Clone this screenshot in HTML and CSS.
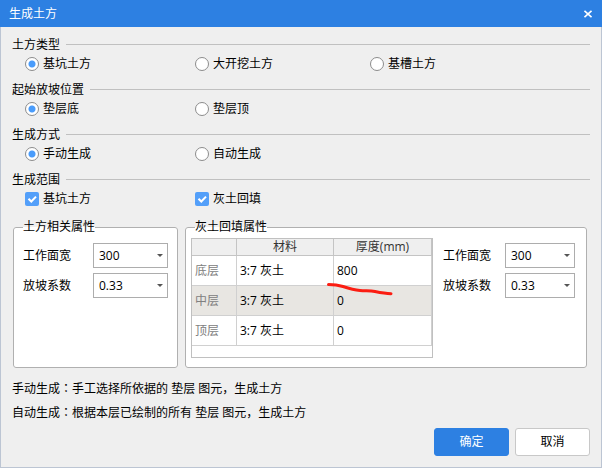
FILE: index.html
```html
<!DOCTYPE html>
<html lang="zh-CN">
<head>
<meta charset="utf-8">
<title>生成土方</title>
<link rel="stylesheet" href="styles.css">
</head>
<body>
<main class="dialog">
  <header class="titlebar">
    <h1 class="title">生成土方</h1>
    <button class="close" type="button" aria-label="关闭">
      <svg width="8" height="8" viewBox="0 0 8 8"><path d="M0.5 0.8L7.5 7.2M7.5 0.8L0.5 7.2"/></svg>
    </button>
  </header>
  <form class="content">
    <section class="section">
      <h2 class="heading">土方类型</h2>
      <div class="choices">
        <label class="choice"><input class="radio" type="radio" name="kind" checked>基坑土方</label>
        <label class="choice"><input class="radio" type="radio" name="kind">大开挖土方</label>
        <label class="choice"><input class="radio" type="radio" name="kind">基槽土方</label>
      </div>
    </section>
    <section class="section">
      <h2 class="heading">起始放坡位置</h2>
      <div class="choices">
        <label class="choice"><input class="radio" type="radio" name="start" checked>垫层底</label>
        <label class="choice"><input class="radio" type="radio" name="start">垫层顶</label>
      </div>
    </section>
    <section class="section">
      <h2 class="heading">生成方式</h2>
      <div class="choices">
        <label class="choice"><input class="radio" type="radio" name="mode" checked>手动生成</label>
        <label class="choice"><input class="radio" type="radio" name="mode">自动生成</label>
      </div>
    </section>
    <section class="section">
      <h2 class="heading">生成范围</h2>
      <div class="choices">
        <label class="choice"><span class="tick"><input class="checkbox" type="checkbox" checked><svg class="mark" width="14" height="14" viewBox="0 0 14 14"><path d="M3.5 6.7L6.3 9.5L11 4.6"/></svg></span>基坑土方</label>
        <label class="choice"><span class="tick"><input class="checkbox" type="checkbox" checked><svg class="mark" width="14" height="14" viewBox="0 0 14 14"><path d="M3.5 6.7L6.3 9.5L11 4.6"/></svg></span>灰土回填</label>
      </div>
    </section>

    <div class="panels">
      <fieldset class="panel panel-earth">
        <legend class="legend">土方相关属性</legend>
        <div class="fields">
          <label for="earth-width">工作面宽</label>
          <span class="combo"><select id="earth-width"><option>300</option></select></span>
          <label for="earth-slope">放坡系数</label>
          <span class="combo"><select id="earth-slope"><option>0.33</option></select></span>
        </div>
      </fieldset>
      <fieldset class="panel panel-fill">
        <legend class="legend">灰土回填属性</legend>
        <div class="fill-body">
          <div class="table-box">
            <table class="layers">
              <colgroup><col class="col-layer"><col class="col-material"><col></colgroup>
              <thead>
                <tr><th></th><th scope="col">材料</th><th scope="col">厚度(mm)</th></tr>
              </thead>
              <tbody>
                <tr><th scope="row">底层</th><td>3:7 灰土</td><td class="marked">800<svg class="stroke" width="70" height="16" viewBox="0 0 70 16"><path d="M4.500 3.500C9 3.500 14 4 19 5.500C25 7.500 30 9 36 9.500C42 10 46 9.500 51 10.500C56 11.500 61 12.500 67 12.800"/></svg></td></tr>
                <tr class="alt"><th scope="row">中层</th><td>3:7 灰土</td><td>0</td></tr>
                <tr><th scope="row">顶层</th><td>3:7 灰土</td><td>0</td></tr>
              </tbody>
            </table>
          </div>
          <div class="fields">
            <label for="fill-width">工作面宽</label>
            <span class="combo"><select id="fill-width"><option>300</option></select></span>
            <label for="fill-slope">放坡系数</label>
            <span class="combo"><select id="fill-slope"><option>0.33</option></select></span>
          </div>
        </div>
      </fieldset>
    </div>

    <div class="notes">
      <p>手动生成<span class="colon" lang="ja">：</span>手工选择所依据的 垫层 图元，生成土方</p>
      <p>自动生成<span class="colon" lang="ja">：</span>根据本层已绘制的所有 垫层 图元，生成土方</p>
    </div>
    <div class="actions">
      <button class="button primary" type="button">确定</button>
      <button class="button" type="button">取消</button>
    </div>
  </form>
</main>
</body>
</html>
```
FILE: styles.css
```css
* {
  box-sizing: border-box;
}

body {
  margin: 0;
  background: #efefef;
  color: #000;
  font: 12px/18px "Open Sans", "Noto Sans CJK SC", sans-serif;
}

h1, h2, p {
  margin: 0;
  font-size: 12px;
  font-weight: 400;
}

button, select, input {
  margin: 0;
  font: inherit;
}

.dialog {
  border: 1px solid #bcc5d3;
  border-top: 0;
}

.titlebar {
  display: flex;
  align-items: center;
  justify-content: space-between;
  height: 27px;
  margin: 0 -1px;
  padding: 0 10px 0 9px;
  background: #2d80e2;
  color: #fff;
}

.close {
  display: flex;
  padding: 0;
  border: 0;
  background: none;
}

.close path {
  fill: none;
  stroke: #fff;
  stroke-width: 1.6;
}

.content {
  padding: 8px 11px 11px;
}

.section {
  margin-bottom: 6px;
}

.heading {
  display: flex;
  align-items: center;
  gap: 6px;
  height: 19px;
}

.heading::after {
  content: "";
  flex: 1;
  height: 1px;
  background: #c0c0c0;
}

.choices {
  display: grid;
  grid-template-columns: 170fr 175fr 220fr;
  height: 20px;
  padding-left: 13px;
}

.choice {
  display: flex;
  align-items: center;
  gap: 4px;
  line-height: 20px;
}

.radio {
  appearance: none;
  width: 14px;
  height: 14px;
  border: 1px solid #8c8c8c;
  border-radius: 50%;
  background: #fff;
}

.radio:checked {
  background: radial-gradient(circle, #4a9cfb 3px, #fff 4px);
}

.tick {
  position: relative;
  display: flex;
}

.checkbox {
  appearance: none;
  width: 14px;
  height: 14px;
  border-radius: 2px;
  background: #539ff9;
}

.mark {
  position: absolute;
  inset: 0;
  fill: none;
  stroke: #fff;
  stroke-width: 2;
  pointer-events: none;
}

.panels {
  display: grid;
  grid-template-columns: 165fr 402fr;
  gap: 7px;
  margin: 9px 3px 0 1px;
}

.panel {
  min-width: 0;
  margin: 0;
  border: 1px solid #b0b0b0;
  border-radius: 3px;
  background: #fff;
}

.panel-earth {
  padding: 2px 9px 9px;
}

.panel-fill {
  padding: 2px 11px 9px 5px;
}

.legend {
  padding: 0;
}

.panel-fill .legend {
  margin-left: 4px;
}

.fields {
  display: grid;
  grid-template-columns: 70px 1fr;
  grid-auto-rows: 25px;
  row-gap: 5px;
  align-items: center;
  padding-top: 5px;
}

.fill-body {
  display: grid;
  grid-template-columns: 242fr 132fr;
  gap: 10px;
}

.fill-body .fields {
  grid-template-columns: 62px 1fr;
  align-content: start;
}

.combo {
  position: relative;
}

.combo select {
  appearance: none;
  display: block;
  width: 100%;
  height: 25px;
  padding: 0 18px 0 5px;
  border: 1px solid #adadad;
  border-radius: 0;
  background: #fff;
  color: #000;
}

.combo::after {
  content: "";
  position: absolute;
  top: 11px;
  right: 5px;
  border: 3px solid transparent;
  border-top-color: #555;
  border-bottom: 0;
  pointer-events: none;
}

.table-box {
  height: 120px;
  border: 1px solid #c0c0c0;
}

.layers {
  width: 100%;
  table-layout: fixed;
  border-collapse: separate;
  border-spacing: 0;
}

.col-layer {
  width: 45px;
}

.col-material {
  width: 97px;
}

.layers th,
.layers td {
  height: 30px;
  padding: 0 3px;
  border-right: 1px solid #d0d0d0;
  border-bottom: 1px solid #d0d0d0;
  font-weight: 400;
  text-align: left;
}

.layers thead th {
  height: 17px;
  border-color: #c4c4c4;
  background: #efefef;
  color: #333;
  line-height: 16px;
  text-align: center;
}

.layers tbody th {
  color: #808080;
}

.alt {
  background: #e8e6e2;
}

.marked {
  position: relative;
}

.stroke {
  position: absolute;
  top: 25px;
  left: -10px;
  fill: none;
  stroke: #fb1d12;
  stroke-width: 3;
  stroke-linecap: round;
}

.notes {
  margin-top: 9px;
  line-height: 24px;
}

.colon {
  font-family: "Noto Sans CJK JP", sans-serif;
  line-height: 1;
}

.actions {
  display: flex;
  justify-content: flex-end;
  gap: 6px;
  margin-top: 3px;
}

.button {
  width: 75px;
  height: 28px;
  padding: 0;
  border: 1px solid #c8c8c8;
  border-radius: 3px;
  background: #fff;
  color: #000;
}

.primary {
  border-color: #2d80e2;
  background: #2d80e2;
  color: #fff;
}
```
